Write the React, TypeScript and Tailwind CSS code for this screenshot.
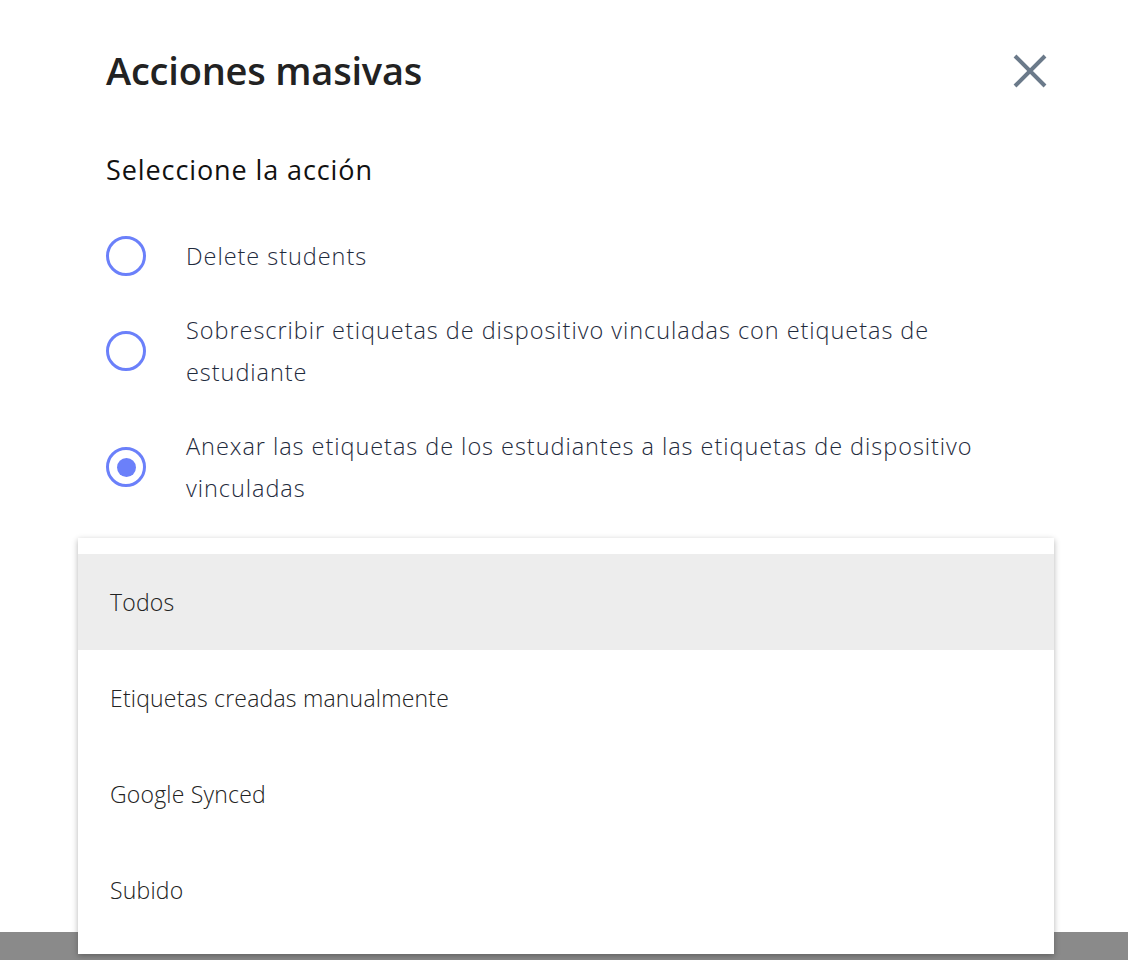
import React from "react";

const font = { fontFamily: "'Open Sans', 'Noto Sans', sans-serif" };

function Radio({ checked }: { checked?: boolean }) {
  return (
    <div className="w-10 h-10 rounded-full border-[3.5px] border-[#6b80fa] flex items-center justify-center shrink-0">
      {checked && <div className="w-[19px] h-[19px] rounded-full bg-[#6b80fa]" />}
    </div>
  );
}

export default function App() {
  const options = [
    { label: "Delete students" },
    { label: "Sobrescribir etiquetas de dispositivo vinculadas con etiquetas de estudiante" },
    { label: "Anexar las etiquetas de los estudiantes a las etiquetas de dispositivo vinculadas", checked: true },
  ];
  const items = ["Todos", "Etiquetas creadas manualmente", "Google Synced", "Subido"];
  return (
    <div className="relative w-[1128px] h-[960px] flex flex-col overflow-hidden" style={font}>
      <div className="h-[932px] bg-white px-[106px] pt-[44px]">
        <div className="flex items-center justify-between">
          <h1 className="text-[38px] font-semibold text-[#222] leading-[52px] tracking-[-0.2px]">Acciones masivas</h1>
          <svg width="40" height="40" viewBox="0 0 40 40" className="mr-[-28px] mt-[2px]">
            <path d="M5 5 L35 35 M35 5 L5 35" stroke="#6b7a8a" strokeWidth="4" strokeLinecap="butt" />
          </svg>
        </div>
        <div className="mt-[54px] text-[27px] text-[#111] leading-[40px] tracking-[0.9px]">Seleccione la acción</div>
        <div className="mt-[45px] flex flex-col gap-[32px]">
          {options.map((o, i) => (
            <div key={i} className="flex items-center">
              <Radio checked={o.checked} />
              <div className="ml-[40px] text-[23.5px] font-light leading-[42px] tracking-[0.95px] text-[#1f2b3d] w-[820px]">{o.label}</div>
            </div>
          ))}
        </div>
      </div>
      <div className="flex-1 bg-[#8a8a8a]" />
      <div className="absolute left-[78px] top-[538px] w-[976px] bg-white py-4 shadow-[0_2px_6px_rgba(0,0,0,0.3)]">
        {items.map((t, i) => (
          <div
            key={t}
            className={`h-[96px] flex items-center pl-[32px] text-[23px] font-light tracking-[0.2px] text-[#222] ${i === 0 ? "bg-[#ededed]" : ""}`}
          >
            {t}
          </div>
        ))}
      </div>
    </div>
  );
}
